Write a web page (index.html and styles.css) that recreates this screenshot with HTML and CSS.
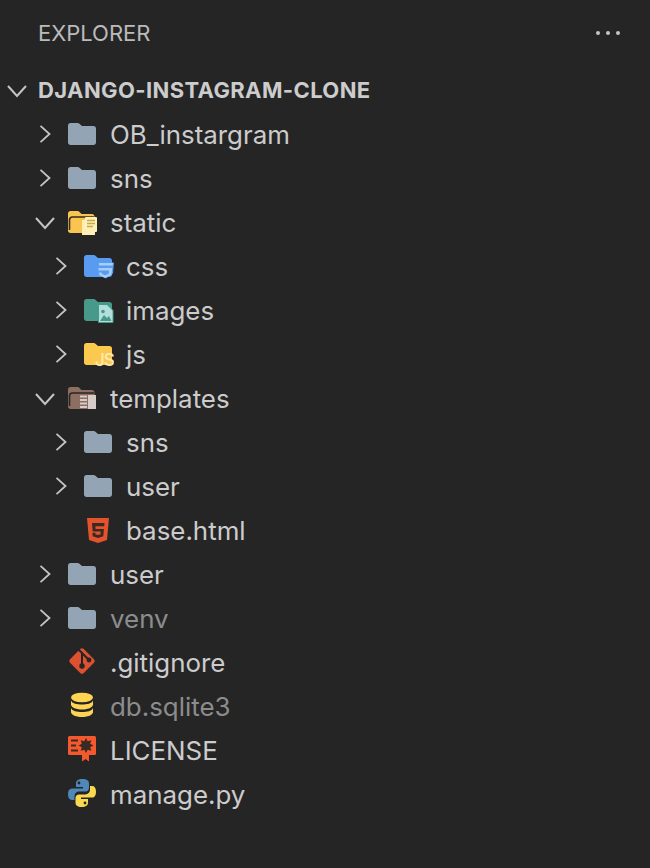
FILE: index.html
```html
<!DOCTYPE html>
<html lang="en">
<head>
<meta charset="utf-8">
<title>Explorer</title>
<link rel="stylesheet" href="styles.css">
</head>
<body>
<svg class="defs" width="0" height="0" aria-hidden="true">
  <defs>
    <symbol id="chev-r" viewBox="0 0 20 24"><path d="M5 3l10 9-10 9" fill="none" stroke="#c5c5c5" stroke-width="2"/></symbol>
    <symbol id="chev-d" viewBox="0 0 24 20"><path d="M3 6l9 10 9-10" fill="none" stroke="#c5c5c5" stroke-width="2"/></symbol>
    <symbol id="folder" viewBox="0 0 32 32"><path d="M4.500 5h7.200c.8 0 1.400.3 2 .9L16 8h11.500c1.400 0 2.500 1.100 2.500 2.500v14c0 1.400-1.100 2.500-2.500 2.500h-23C3.100 27 2 25.900 2 24.500v-17C2 6.100 3.100 5 4.500 5z" fill="#93a5b4"/></symbol>
  </defs>
</svg>
<main class="explorer">
  <header class="title-bar">
    <span class="title">EXPLORER</span>
    <span class="more"><i></i><i></i><i></i></span>
  </header>
  <ul class="tree">
    <li class="row root"><svg class="twistie-d"><use href="#chev-d"/></svg><span class="label">DJANGO-INSTAGRAM-CLONE</span></li>

    <li class="row d1"><svg class="twistie"><use href="#chev-r"/></svg><svg class="icon"><use href="#folder"/></svg><span class="label">OB_instargram</span></li>
    <li class="row d1"><svg class="twistie"><use href="#chev-r"/></svg><svg class="icon"><use href="#folder"/></svg><span class="label">sns</span></li>

    <li class="row d1"><svg class="twistie-d"><use href="#chev-d"/></svg>
      <svg class="icon" viewBox="0 0 32 32">
        <path d="M4.500 5h7c.8 0 1.500.3 2 .9L15.500 8H26c1.400 0 2.500 1.100 2.500 2.500V24c0 1.700-1.300 3-3 3h-21C3.100 27 2 25.900 2 24.500v-17C2 6.100 3.100 5 4.500 5z" fill="#f9c550"/>
        <path d="M3.500 24V14c0-2 1.100-3 3-3H28" fill="none" stroke="#332c18" stroke-width="1.600"/>
        <path d="M16 14h3v12h10v3H16z" fill="#fff0b8"/>
        <rect x="19" y="11" width="12" height="15" rx="1" fill="#fff0b8"/>
        <path d="M21 14.500h8M21 17.500h8M21 20.500h6" stroke="#c9a94a" stroke-width="1.500"/>
      </svg>
      <span class="label">static</span></li>

    <li class="row d2"><svg class="twistie"><use href="#chev-r"/></svg>
      <svg class="icon" viewBox="0 0 32 32">
        <path d="M4.500 5h7.200c.8 0 1.400.3 2 .9L16 8h11.500c1.400 0 2.500 1.100 2.500 2.500v14c0 1.400-1.100 2.500-2.500 2.500h-23C3.100 27 2 25.900 2 24.500v-17C2 6.100 3.100 5 4.500 5z" fill="#5a9bf2"/>
        <path d="M16 12.500h16l-1 11-7 5-7-3.500z" fill="#5a9bf2"/>
        <path d="M17 13h14l-.4 2.500H17zM16.500 18h13.700l-.8 7-6.400 3-5.600-2.800-.4-2.700h2.600l.2 1.200 3.200 1.500 3.700-1.500.3-3.200H16.500z" fill="#a3cffb"/>
      </svg>
      <span class="label">css</span></li>

    <li class="row d2"><svg class="twistie"><use href="#chev-r"/></svg>
      <svg class="icon" viewBox="0 0 32 32">
        <path d="M4.500 5h7.200c.8 0 1.400.3 2 .9L16 8h11.500c1.400 0 2.500 1.100 2.500 2.500v14c0 1.400-1.100 2.500-2.500 2.500h-23C3.100 27 2 25.900 2 24.500v-17C2 6.100 3.100 5 4.500 5z" fill="#47998a"/>
        <path d="M16.500 10.500h8.500l6 6v12H16.500z" fill="#b2dfdb" stroke="#47998a"/>
        <circle cx="21" cy="17.500" r="1.800" fill="#47998a"/>
        <path d="M18 27l4-6 3 3 2-2 2.500 5z" fill="#47998a"/>
      </svg>
      <span class="label">images</span></li>

    <li class="row d2"><svg class="twistie"><use href="#chev-r"/></svg>
      <svg class="icon" viewBox="0 0 32 32">
        <path d="M4.500 5h7.200c.8 0 1.400.3 2 .9L16 8h11.500c1.400 0 2.500 1.100 2.500 2.500v14c0 1.400-1.100 2.500-2.500 2.500h-23C3.100 27 2 25.900 2 24.500v-17C2 6.100 3.100 5 4.500 5z" fill="#fcc94f"/>
        <text class="js-mark" x="13" y="27.500">JS</text>
      </svg>
      <span class="label">js</span></li>

    <li class="row d1"><svg class="twistie-d"><use href="#chev-d"/></svg>
      <svg class="icon" viewBox="0 0 32 32">
        <path d="M4.500 5h7c.8 0 1.500.3 2 .9L15.500 8H26c1.400 0 2.500 1.100 2.500 2.500V24c0 1.700-1.300 3-3 3h-21C3.100 27 2 25.900 2 24.500v-17C2 6.100 3.100 5 4.500 5z" fill="#8d6e63"/>
        <path d="M3.500 24V14c0-2 1.100-3 3-3H28" fill="none" stroke="#2c2523" stroke-width="1.600"/>
        <path d="M14 14.500h7M14 18h7M14 21.500h7M14 25h7" stroke="#d7ccc8" stroke-width="2"/>
        <rect x="22" y="13" width="8" height="14" fill="#d7ccc8"/>
      </svg>
      <span class="label">templates</span></li>

    <li class="row d2"><svg class="twistie"><use href="#chev-r"/></svg><svg class="icon"><use href="#folder"/></svg><span class="label">sns</span></li>
    <li class="row d2"><svg class="twistie"><use href="#chev-r"/></svg><svg class="icon"><use href="#folder"/></svg><span class="label">user</span></li>

    <li class="row d2 leaf">
      <svg class="icon" viewBox="0 0 32 32">
        <path d="M5 4h22l-2 22-9 3-9-3z" fill="#e4532b"/>
        <path d="M10 9h12.500l-.3 3.200h-8.800l.2 2.800h8.300l-.6 7.300-5.300 1.700-5.300-1.700-.3-3.500h3l.1 1.500 2.500.8 2.500-.8.200-2.800H10.700z" fill="#3a2a26"/>
      </svg>
      <span class="label">base.html</span></li>

    <li class="row d1"><svg class="twistie"><use href="#chev-r"/></svg><svg class="icon"><use href="#folder"/></svg><span class="label">user</span></li>
    <li class="row d1 muted"><svg class="twistie"><use href="#chev-r"/></svg><svg class="icon"><use href="#folder"/></svg><span class="label">venv</span></li>

    <li class="row d1 leaf">
      <svg class="icon" viewBox="0 0 32 32">
        <rect x="6.300" y="5.300" width="19.400" height="19.400" rx="2.500" transform="rotate(45 16 15)" fill="#dd5130"/>
        <path d="M12.500 3.500l3.500 3.500V20M16 7l7 7" fill="none" stroke="#252526" stroke-width="2"/>
        <circle cx="16" cy="20" r="2.700" fill="#252526"/>
        <circle cx="23" cy="14" r="2.400" fill="#252526"/>
      </svg>
      <span class="label">.gitignore</span></li>

    <li class="row d1 leaf muted">
      <svg class="icon" viewBox="0 0 32 32">
        <ellipse cx="16" cy="7.500" rx="11" ry="4.800" fill="#ffd452"/>
        <path d="M5 10.500c1 3 6 4 11 4s10-1 11-4v4.500c-1 3-6 4.500-11 4.500S6 18 5 15z" fill="#ffd452"/>
        <path d="M5 18c1 3 6 4 11 4s10-1 11-4v4.500c-1 3-6 4.500-11 4.500S6 25.500 5 22.500z" fill="#ffd452"/>
      </svg>
      <span class="label">db.sqlite3</span></li>

    <li class="row d1 leaf">
      <svg class="icon" viewBox="0 0 32 32">
        <rect x="2" y="2" width="28" height="19" rx="1.500" fill="#f4592e"/>
        <path d="M16 20v7.500l3.500-2.500 3.500 2.500V20z" fill="#f4592e"/>
        <path d="M5 6.500h7M5 11.500h5M5 16.500h7" stroke="#3a2a26" stroke-width="2"/>
        <polygon points="20,4 21.700,7.300 25.300,6.200 24.200,9.800 27.500,11.500 24.200,13.200 25.300,16.800 21.700,15.700 20,19 18.300,15.700 14.700,16.800 15.800,13.200 12.500,11.500 15.800,9.800 14.700,6.200 18.300,7.300" fill="#3a2a26"/>
      </svg>
      <span class="label">LICENSE</span></li>

    <li class="row d1 leaf">
      <svg class="icon" viewBox="0 0 32 32">
        <path d="M16.500 1C12 1 10 2.700 10 5.500V9h7v1.500H6C3.400 10.500 2 12.700 2 16.300 2 20 3.500 22 6 22h2.500v-3.600c0-2.800 2-4.900 4.700-4.900h6.200c2.300 0 3.600-1.500 3.600-3.700V5.500C23 2.700 21 1 16.500 1z" fill="#4f87b8"/>
        <circle cx="13" cy="5" r="1.400" fill="#252526"/>
        <path d="M15.500 29c4.500 0 6.500-1.700 6.500-4.500V21h-7v-1.500h11c2.600 0 4-2.200 4-5.800 0-3.700-1.500-5.700-4-5.700h-2v3.600c0 2.800-2 4.900-4.700 4.900h-6.200c-2.300 0-3.600 1.500-3.600 3.700v4.300c0 2.800 2 4.500 6 4.500z" fill="#fbd94f"/>
        <circle cx="19" cy="25" r="1.400" fill="#252526"/>
      </svg>
      <span class="label">manage.py</span></li>
  </ul>
</main>
</body>
</html>
```
FILE: styles.css
```css
* { box-sizing: border-box; }
html, body { height: 100%; }
body {
  margin: 0;
  background: #252526;
  font-family: Inter, "Liberation Sans", sans-serif;
  color: #cccccc;
  overflow: hidden;
}
.defs { position: absolute; }
.explorer { display: flex; flex-direction: column; }
.title-bar {
  display: flex;
  justify-content: space-between;
  align-items: center;
  height: 68px;
  padding: 0 30px 2px 38px;
}
.title { font-size: 22px; color: #bbbbbb; }
.more { display: flex; gap: 6px; }
.more i { width: 4px; height: 4px; border-radius: 50%; background: #c5c5c5; }
.tree { list-style: none; margin: 0; padding: 0; }
.row {
  display: flex;
  align-items: center;
  height: 44px;
  font-size: 25.9px;
}
.row.root { padding-left: 8px; font-weight: 700; font-size: 22px; }
.row.root .label { letter-spacing: 0.38px; }
.row.d1 { padding-left: 36px; }
.row.d2 { padding-left: 52px; }
.row.leaf .icon { margin-left: 30px; }
.twistie { width: 18px; height: 24px; margin-right: 12px; flex: none; }
.twistie-d { width: 24px; height: 20px; margin-left: -3px; margin-right: 9px; flex: none; }
.icon { width: 32px; height: 32px; margin-right: 12px; flex: none; }
.muted .label { color: #8c8c8c; }
.js-mark {
  font: 500 17px Inter, "Liberation Sans", sans-serif;
  letter-spacing: -1px;
  fill: #ffeab0;
}
```
